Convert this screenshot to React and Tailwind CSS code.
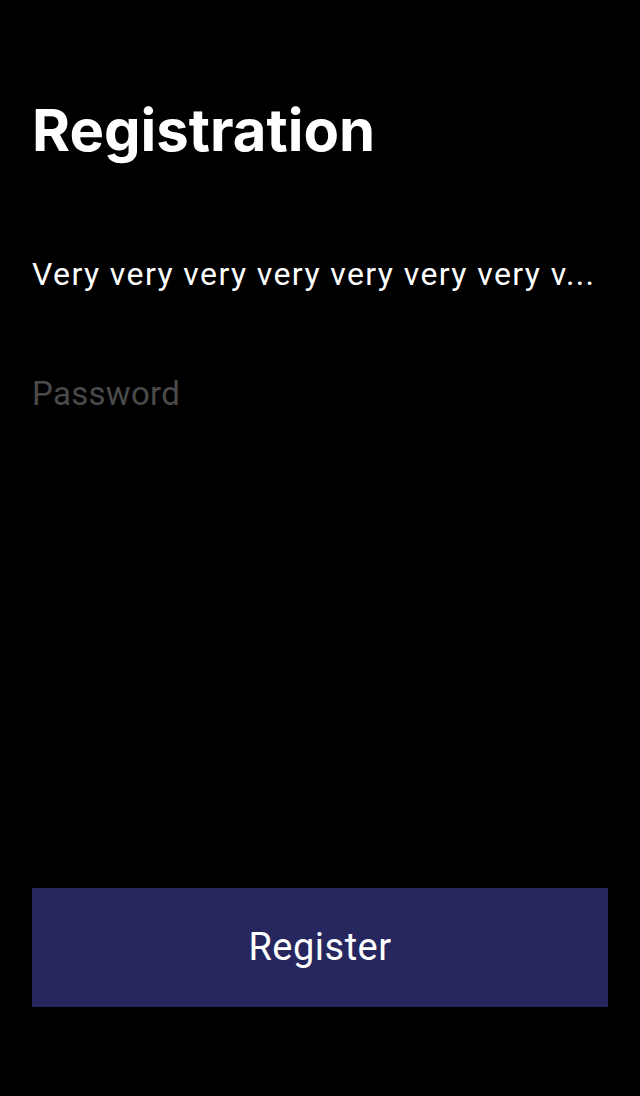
export default function App() {
  return (
    <div className="w-[640px] h-[1096px] bg-black flex flex-col px-8" style={{ fontFamily: 'Roboto, Inter, "Noto Sans", sans-serif' }}>
      <h1 className="mt-[96px] text-[58px] leading-[68px] font-bold text-white" style={{ fontFamily: 'Inter, sans-serif' }}>Registration</h1>
      <div className="mt-[90px] text-[32px] leading-[40px] text-white whitespace-nowrap tracking-[1.4px]">
        Very very very very very very very v...
      </div>
      <div className="mt-[80px] text-[33px] leading-[40px] text-[#4a4a4a] tracking-[0.3px]">Password</div>
      <div className="flex-1" />
      <button className="mb-[89px] h-[119px] w-full bg-[#272760] text-white text-[38px] tracking-[0.5px]">Register</button>
    </div>
  );
}
